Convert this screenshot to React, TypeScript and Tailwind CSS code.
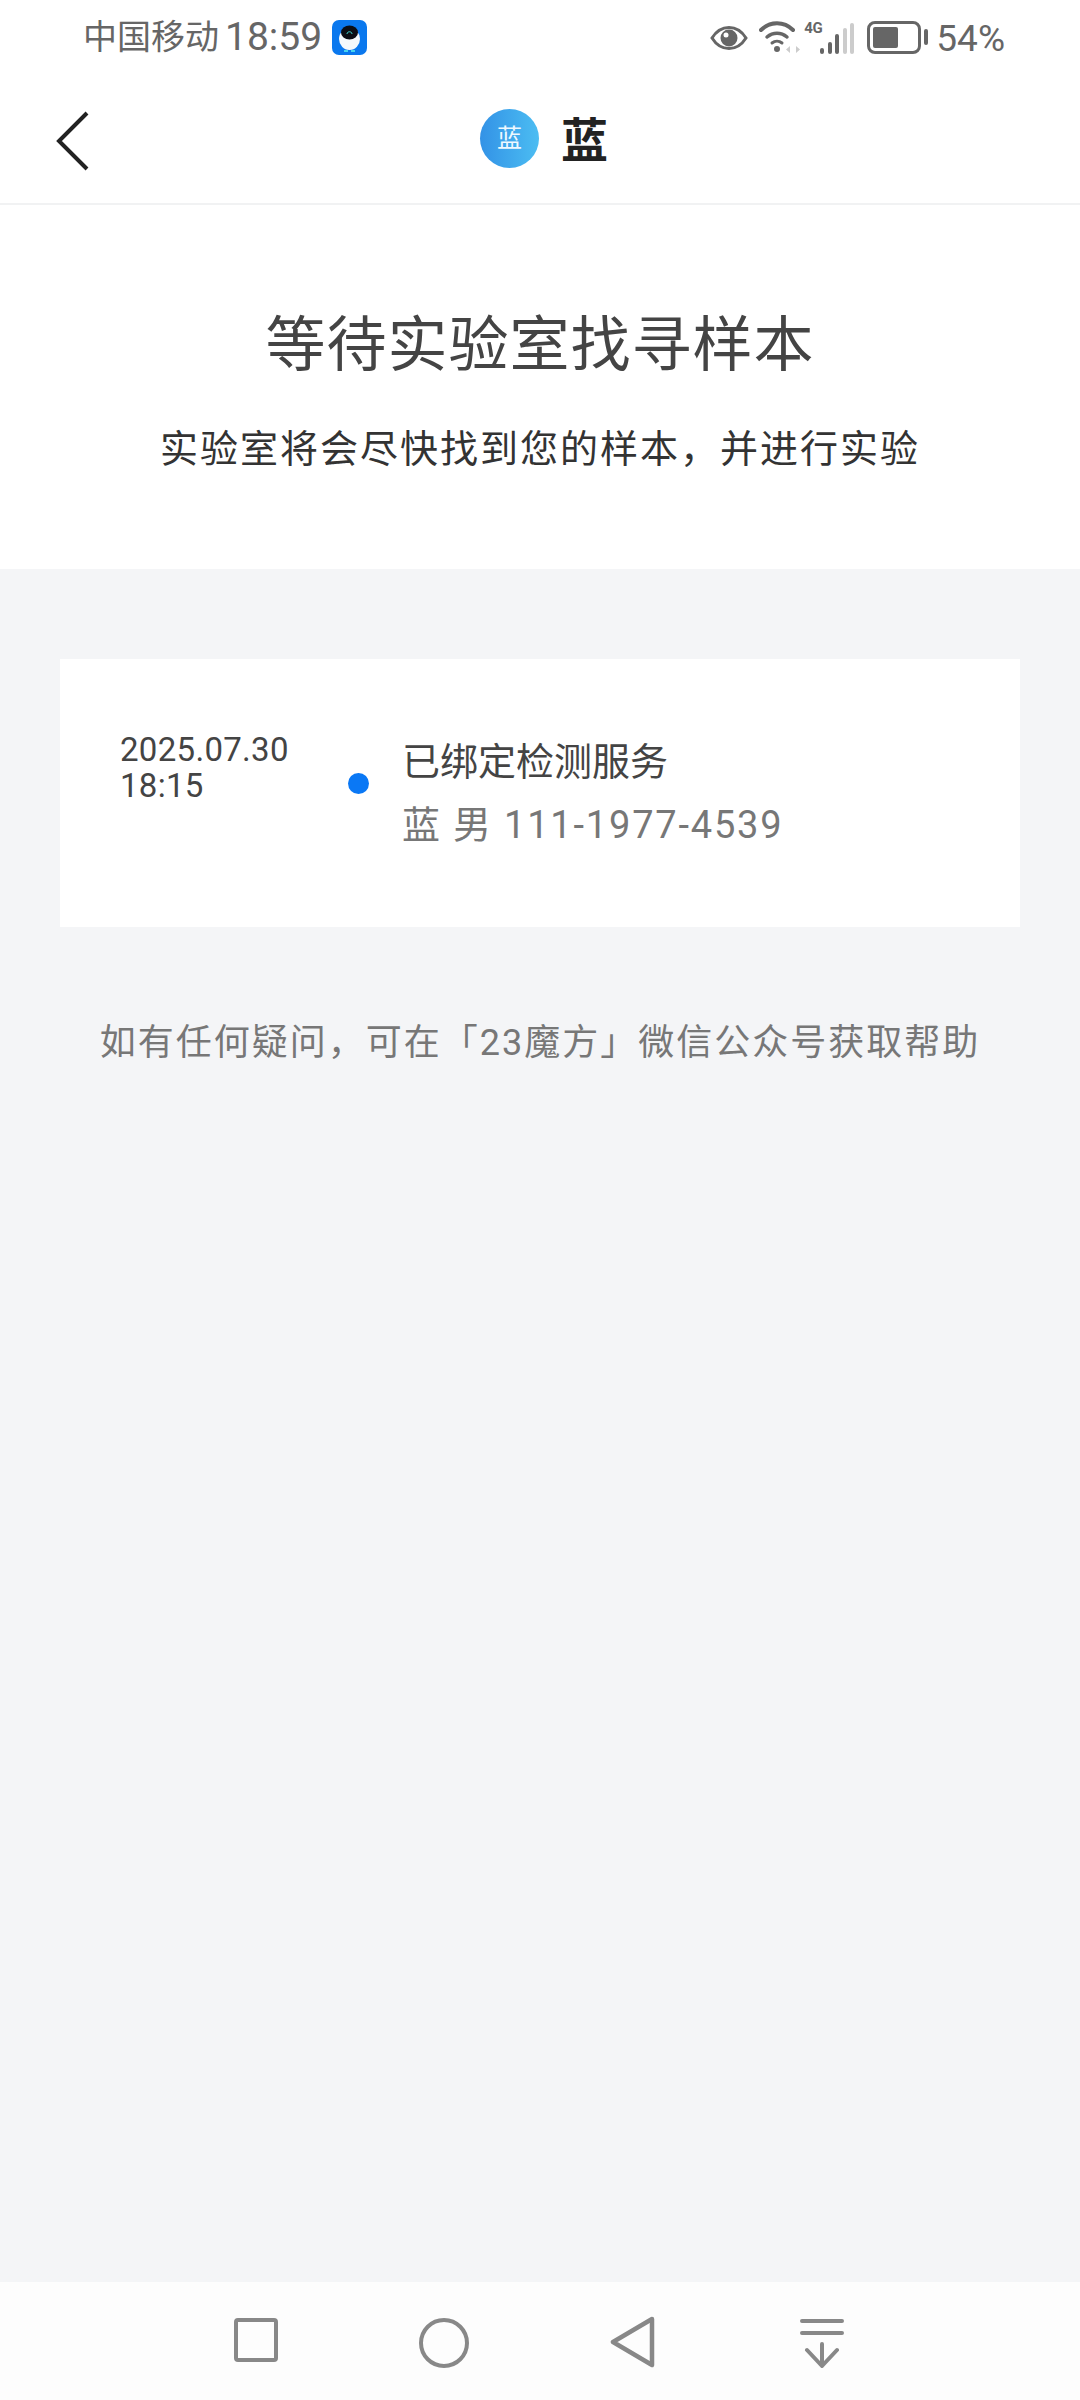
const fontStack = "font-[Roboto,'Noto_Sans_CJK_SC',sans-serif]";

function AppBadge() {
  return (
    <svg width="35" height="35" viewBox="0 0 35 35" className="ml-[10px]">
      <rect width="35" height="35" rx="7" fill="#0a78ee" />
      <ellipse cx="17.5" cy="19" rx="10.5" ry="11" fill="#f5f9fc" />
      <ellipse cx="17.5" cy="12.5" rx="8.5" ry="7" fill="#0b0d14" />
      <path d="M15 14c0-3 5-3 5 0" fill="none" stroke="#3fd8d0" strokeWidth="1" />
      <path d="M12 31h4M19 31h4" stroke="#46d4f0" strokeWidth="2" />
    </svg>
  );
}

function StatusIcons() {
  return (
    <div className="flex items-center text-[#666]">
      <svg width="38" height="26" viewBox="0 0 38 26" className="mt-[1px]">
        <path d="M2 13C7 5 12 2.500 19 2.500S31 5 36 13c-5 8-10 10.500-17 10.500S7 21 2 13z" fill="none" stroke="#666" strokeWidth="3" />
        <circle cx="19" cy="13" r="8.500" fill="#666" />
        <circle cx="16" cy="10" r="2.500" fill="#fff" />
      </svg>
      <svg width="44" height="34" viewBox="0 0 44 34" className="ml-[11px]">
        <path d="M2 10C11 1 25 1 34 10" fill="none" stroke="#666" strokeWidth="4" strokeLinecap="round" />
        <path d="M8 17c6-5 14-5 20 0" fill="none" stroke="#666" strokeWidth="3.500" strokeLinecap="round" />
        <path d="M13 23c3-2.500 7-2.500 10 0" fill="none" stroke="#666" strokeWidth="3" strokeLinecap="round" />
        <circle cx="18" cy="29" r="3" fill="#666" />
        <path d="M31 26v7l-4-3.500zM37 26v7l4-3.500z" fill="#ccc" />
      </svg>
      <div className="relative ml-[1px] h-[34px] w-[50px]">
        <span className="absolute left-0 top-[-1px] text-[15px] font-bold leading-[18px] tracking-[-0.5px] text-[#666]">4G</span>
        <div className="absolute bottom-0 right-0 flex items-end gap-[3.500px]">
          <div className="h-[6px] w-[4px] rounded-full bg-[#666]" />
          <div className="h-[12px] w-[4px] rounded-full bg-[#666]" />
          <div className="h-[20px] w-[4px] rounded-full bg-[#666]" />
          <div className="h-[26px] w-[4px] rounded-full bg-[#ccc]" />
          <div className="h-[31px] w-[4px] rounded-full bg-[#ccc]" />
        </div>
      </div>
      <div className="ml-[13px] flex h-[33px] w-[54px] items-center rounded-[8px] border-[3px] border-[#666] px-[3px]">
        <div className="h-[21px] w-[25px] rounded-[2px] bg-[#666]" />
      </div>
      <div className="ml-[3px] h-[16px] w-[4px] rounded-full bg-[#666]" />
      <span className="ml-[8px] mt-[2px] text-[37px] leading-none text-[#666]">54%</span>
    </div>
  );
}

function NavIcons() {
  return (
    <div className="flex h-[118px] shrink-0 items-start bg-[#fdfdfd] pl-[234px] pt-[36px]">
      <svg width="44" height="44" viewBox="0 0 44 44">
        <rect x="2" y="2" width="40" height="40" rx="2" fill="none" stroke="#888" strokeWidth="4" />
      </svg>
      <svg width="50" height="50" viewBox="0 0 50 50" className="ml-[141px]">
        <circle cx="25" cy="25" r="23" fill="none" stroke="#888" strokeWidth="4" />
      </svg>
      <svg width="46" height="52" viewBox="0 0 46 52" className="ml-[141px] mt-[-2px]">
        <path d="M42 3 3 26l39 23z" fill="none" stroke="#888" strokeWidth="4.500" strokeLinejoin="round" />
      </svg>
      <svg width="44" height="50" viewBox="0 0 44 50" className="ml-[144px]">
        <path d="M2 3h40M2 15h40M22 26v21M7 32l15 16 15-16" fill="none" stroke="#888" strokeWidth="4" strokeLinecap="round" strokeLinejoin="round" />
      </svg>
    </div>
  );
}

export default function App() {
  return (
    <div className={`flex h-[2400px] w-[1080px] flex-col overflow-hidden bg-[#f4f5f7] ${fontStack}`}>
      <div className="bg-white">
        <div className="flex h-[74px] items-center justify-between pl-[83px] pr-[75px]">
          <div className="flex items-center">
            <span className="text-[34px] leading-none text-[#666]">中国移动</span>
            <span className="ml-[6px] text-[39px] leading-none text-[#666]">18:59</span>
            <AppBadge />
          </div>
          <StatusIcons />
        </div>
        <div className="relative flex h-[131px] items-center justify-center border-b-2 border-[#f1f2f3] pl-[8px]">
          <svg width="36" height="64" viewBox="0 0 36 64" className="absolute left-[54px] top-[35px]">
            <path d="M33 4 5 32l28 28" fill="none" stroke="#222" strokeWidth="4" />
          </svg>
          <div className="flex items-center">
            <div className="flex h-[59px] w-[59px] items-center justify-center rounded-full bg-gradient-to-r from-[#3392e6] to-[#4cbdf2] text-[25px] text-[#eef8ff]">蓝</div>
            <span className="ml-[22px] mt-[3px] text-[47px] font-bold leading-none text-[#222]">蓝</span>
          </div>
        </div>
        <div className="flex h-[364px] flex-col items-center pt-[103px]">
          <h1 className="text-[60px] leading-[76px] tracking-[1px] text-[#444]">等待实验室找寻样本</h1>
          <p className="mt-[42px] text-[38px] leading-[46px] tracking-[2px] text-[#333]">实验室将会尽快找到您的样本，并进行实验</p>
        </div>
      </div>

      <main className="flex-1 px-[60px] pt-[90px]">
        <section className="flex h-[268px] items-center bg-white pl-[60px]">
          <div className="w-[168px] self-start pt-[73px] text-[33px] leading-[36px] tracking-[0.3px] text-[#444]">
            <p>2025.07.30</p>
            <p>18:15</p>
          </div>
          <div className="ml-[60px] mt-[-20px] h-[21px] w-[21px] rounded-full bg-[#0a78f5]" />
          <div className="ml-[33px]">
            <p className="text-[38px] leading-[50px] text-[#444]">已绑定检测服务</p>
            <p className="mt-[13px] text-[38px] leading-[50px] tracking-[1.800px] text-[#777]">蓝 男 111-1977-4539</p>
          </div>
        </section>
        <p className="mt-[91px] text-center text-[36px] leading-[50px] tracking-[2px] text-[#777]">如有任何疑问，可在「23魔方」微信公众号获取帮助</p>
      </main>

      <NavIcons />
    </div>
  );
}
